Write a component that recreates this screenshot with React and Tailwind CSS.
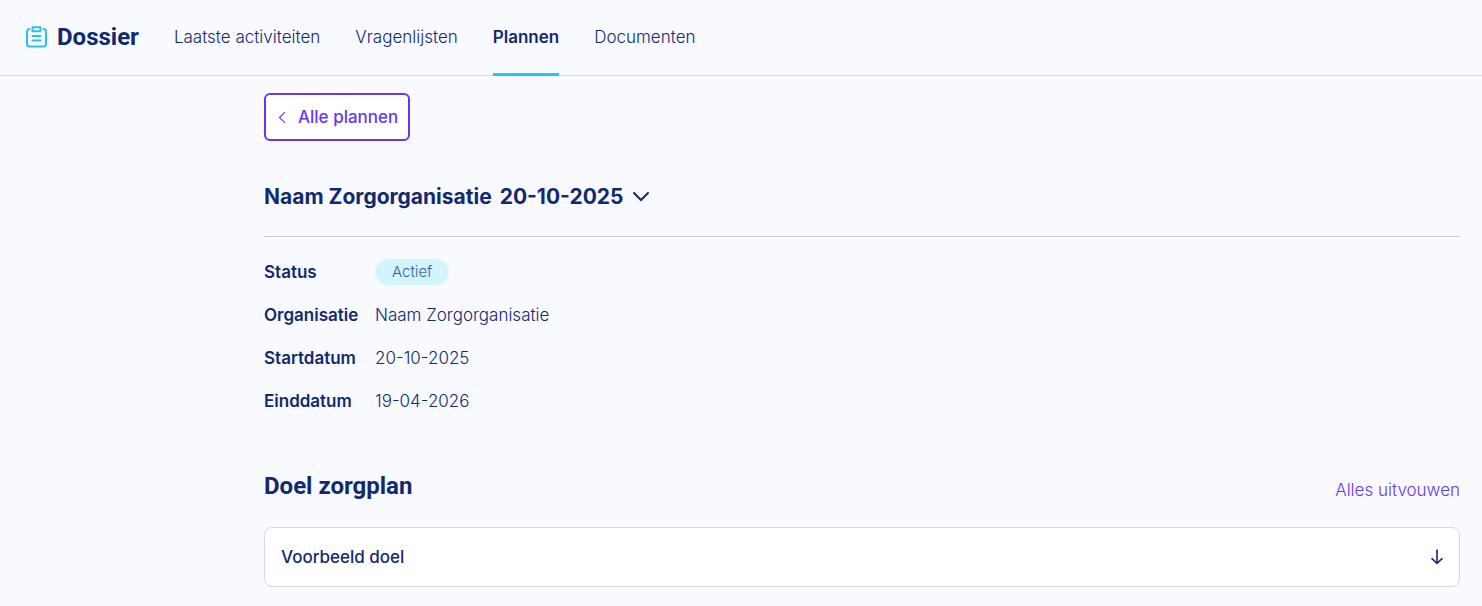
import React from "react";

const navItems = [
  { label: "Laatste activiteiten" },
  { label: "Vragenlijsten" },
  { label: "Plannen", active: true },
  { label: "Documenten" },
];

const details = [
  { label: "Status", value: "Actief", badge: true },
  { label: "Organisatie", value: "Naam Zorgorganisatie" },
  { label: "Startdatum", value: "20-10-2025" },
  { label: "Einddatum", value: "19-04-2026" },
];

function ClipboardIcon() {
  return (
    <svg width="21" height="22" viewBox="0 0 21 22" fill="none" stroke="#27c2f0" strokeWidth="2" strokeLinecap="round" strokeLinejoin="round" aria-hidden="true">
      <path d="M3.500 3A2.500 2.500 0 0 0 1 5.500V18a2.500 2.500 0 0 0 2.500 2.500h14A2.500 2.500 0 0 0 20 18V5.500A2.500 2.500 0 0 0 17.500 3" />
      <path d="M6.500 1.200h8v4h-8z" />
      <path d="M6.500 10h8M6.500 14.500h8" />
    </svg>
  );
}

function ChevronLeft() {
  return (
    <svg width="8" height="12" viewBox="0 0 8 12" fill="none" stroke="currentColor" strokeWidth="1.100" aria-hidden="true">
      <path d="M7 1.200 1.500 6.500 7 11.800" />
    </svg>
  );
}

function ChevronDown() {
  return (
    <svg width="18" height="12" viewBox="0 0 18 12" fill="none" stroke="currentColor" strokeWidth="2" strokeLinecap="round" aria-hidden="true">
      <path d="M2 2 9 9l7-7" />
    </svg>
  );
}

function ArrowDown() {
  return (
    <svg width="12" height="16" viewBox="0 0 12 16" fill="none" stroke="currentColor" strokeWidth="1.600" strokeLinecap="round" strokeLinejoin="round" aria-hidden="true">
      <path d="M6 1v13.500M1 9.700l5 4.800 5-4.800" />
    </svg>
  );
}

export default function App() {
  return (
    <div className="min-h-screen bg-[#f9faff] font-[Inter,sans-serif] text-[17px] leading-6 font-light text-[#112a6e]">
      <header className="flex h-[76px] items-stretch border-b border-[#d5d8e2] pl-[26px]">
        <a href="#dossier" className="mr-[35px] flex items-center gap-2.5 pb-0.5 font-[Roboto,sans-serif] text-2xl font-bold">
          <ClipboardIcon />
          Dossier
        </a>
        <nav aria-label="Hoofdmenu" className="-mb-px flex gap-[35px]">
          {navItems.map((item) => (
            <a
              key={item.label}
              href="#nav"
              aria-current={item.active ? "page" : undefined}
              className={
                item.active
                  ? "flex items-center border-b-3 border-[#27c2f0] font-semibold"
                  : "flex items-center border-b-3 border-transparent"
              }
            >
              {item.label}
            </a>
          ))}
        </nav>
      </header>

      <main className="pt-[17px] pr-[22px] pb-5 pl-[264px]">
        <button type="button" className="flex h-12 items-center gap-3 rounded-md border-2 border-[#6536f4] bg-white pr-[10px] pl-3 font-medium text-[#6536f4]">
          <ChevronLeft />
          Alle plannen
        </button>

        <h1 className="mt-10 border-b border-[#cbcddb] pb-[23px] text-[21px] leading-8 font-bold">
          <button type="button" aria-expanded="false" className="flex items-center gap-2">
            <span>Naam Zorgorganisatie</span>
            <span>20-10-2025</span>
            <ChevronDown />
          </button>
        </h1>

        <dl className="mt-[13px]">
          {details.map((row) => (
            <div key={row.label} className="flex h-[43px] items-center">
              <dt className="w-[111px] font-semibold">{row.label}</dt>
              <dd>
                {row.badge ? (
                  <span className="flex h-[26px] items-center rounded-full bg-[#d2f4fd] px-[17px] text-[15px] text-[#32648f]">{row.value}</span>
                ) : (
                  row.value
                )}
              </dd>
            </div>
          ))}
        </dl>

        <section className="mt-12">
          <div className="flex items-end justify-between">
            <h2 className="font-[Roboto,sans-serif] text-2xl leading-8 font-bold">Doel zorgplan</h2>
            <button type="button" className="text-[#6536f4]">Alles uitvouwen</button>
          </div>
          <button type="button" aria-expanded="false" className="mt-[25px] flex h-[60px] w-full items-center justify-between rounded-lg border border-[#d5d8e5] bg-white px-4 font-medium">
            Voorbeeld doel
            <ArrowDown />
          </button>
        </section>
      </main>
    </div>
  );
}
